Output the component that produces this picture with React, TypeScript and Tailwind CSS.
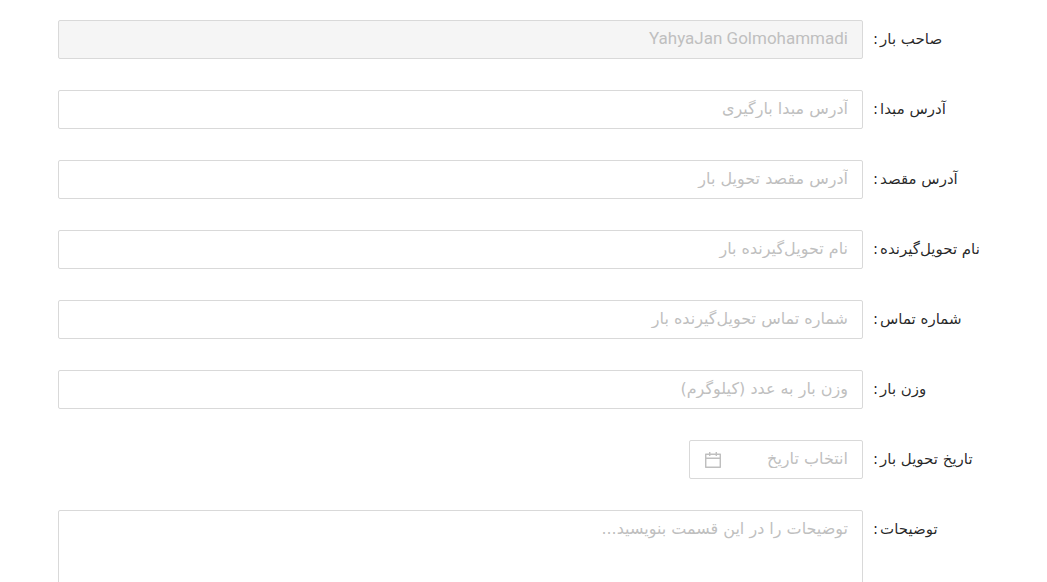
import type { ReactNode } from 'react';

const control =
  'block w-full rounded-xs border border-[#d9d9d9] bg-white px-3.5 text-right text-base leading-6 text-black/85 outline-none placeholder:text-[#bfbfbf] focus:border-[#40a9ff]';

function Field({ id, label, children }: { id: string; label: string; children: ReactNode }) {
  return (
    <div className="flex items-start">
      <label
        htmlFor={id}
        className="flex h-[38px] w-[184px] shrink-0 items-center justify-end gap-0.5 pl-2.5 text-[15px] leading-6 whitespace-nowrap text-black/85"
      >
        <span>{label}</span>
        <span>:</span>
      </label>
      <div className="min-w-0 flex-1">{children}</div>
    </div>
  );
}

const textFields = [
  { id: 'origin', label: 'آدرس مبدا', placeholder: 'آدرس مبدا بارگیری' },
  { id: 'destination', label: 'آدرس مقصد', placeholder: 'آدرس مقصد تحویل بار' },
  { id: 'receiver', label: 'نام تحویل‌گیرنده', placeholder: 'نام تحویل‌گیرنده بار' },
  { id: 'phone', label: 'شماره تماس', placeholder: 'شماره تماس تحویل‌گیرنده بار' },
  { id: 'weight', label: 'وزن بار', placeholder: 'وزن بار به عدد (کیلوگرم)' },
];

export default function App() {
  return (
    <main dir="rtl" lang="fa" className="h-screen overflow-hidden bg-white">
      <form className="flex flex-col gap-[31px] pt-5 pl-[58px] font-['DejaVu_Sans',sans-serif]">
        <Field id="owner" label="صاحب بار">
          <input
            id="owner"
            disabled
            defaultValue="YahyaJan Golmohammadi"
            className="block h-[39px] w-full rounded-xs border border-[#d9d9d9] bg-[#f5f5f5] px-3.5 pb-1 text-right font-['Roboto',sans-serif] text-[17px] leading-6 text-[#bfbfbf]"
          />
        </Field>
        {textFields.map((f) => (
          <Field key={f.id} id={f.id} label={f.label}>
            <input id={f.id} type="text" placeholder={f.placeholder} className={`${control} h-[39px] pb-0.5`} />
          </Field>
        ))}
        <Field id="date" label="تاریخ تحویل بار">
          <div className="flex h-[39px] w-[174px] items-center rounded-xs border border-[#d9d9d9] bg-white pr-3.5 pl-[15px]">
            <input
              id="date"
              type="text"
              placeholder="انتخاب تاریخ"
              className="min-w-0 flex-1 bg-transparent pb-0.5 text-right text-base leading-6 text-black/85 outline-none placeholder:text-[#bfbfbf]"
            />
            <svg aria-hidden="true" viewBox="112 112 800 800" className="size-4 shrink-0 fill-[#bfbfbf]">
              <path d="M880 184H712v-64c0-4.4-3.6-8-8-8h-56c-4.4 0-8 3.6-8 8v64H384v-64c0-4.4-3.6-8-8-8h-56c-4.4 0-8 3.6-8 8v64H144c-17.7 0-32 14.3-32 32v664c0 17.7 14.3 32 32 32h736c17.7 0 32-14.3 32-32V216c0-17.7-14.3-32-32-32zm-40 656H184V460h656v380zM184 392V256h128v48c0 4.4 3.6 8 8 8h56c4.4 0 8-3.6 8-8v-48h256v48c0 4.4 3.6 8 8 8h56c4.4 0 8-3.6 8-8v-48h128v136H184z" />
            </svg>
          </div>
        </Field>
        <Field id="notes" label="توضیحات">
          <textarea
            id="notes"
            rows={4}
            placeholder="توضیحات را در این قسمت بنویسید..."
            className={`${control} resize-none py-1.5`}
          />
        </Field>
      </form>
    </main>
  );
}
